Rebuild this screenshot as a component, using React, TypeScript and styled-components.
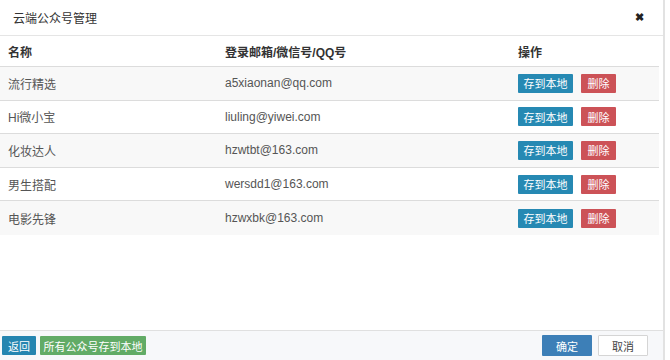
import React from "react";
import styled, { createGlobalStyle } from "styled-components";

const Global = createGlobalStyle`
  html, body { margin: 0; padding: 0; background: #fff; }
  body { font-family: "Liberation Sans", "Noto Sans CJK SC", sans-serif; font-size: 12px; color: #333; }
`;

const Modal = styled.div`
  width: 665px;
  height: 360px;
  display: flex;
  flex-direction: column;
  border-right: 2px solid #e2e2e2;
  box-sizing: border-box;
  background: #fff;
`;

const Header = styled.div`
  height: 36px;
  display: flex;
  align-items: center;
  justify-content: space-between;
  padding: 0 19px 0 13px;
  border-bottom: 1px solid #e5e5e5;
  box-sizing: border-box;
`;

const Title = styled.div`
  font-size: 12px;
  color: #333;
`;

const Close = styled.div`
  font-size: 11px;
  font-weight: bold;
  color: #222;
  line-height: 1;
`;

const Body = styled.div`
  flex: 1;
  padding: 0 4px 0 0;
`;

const Table = styled.div`
  display: flex;
  flex-direction: column;
`;

const Row = styled.div<{ $striped?: boolean; $head?: boolean }>`
  display: grid;
  grid-template-columns: 217px 293px 1fr;
  align-items: center;
  height: ${(p) => (p.$head ? "31px" : "33.6px")};
  padding-left: 8px;
  border-bottom: 1px solid #dcdcdc;
  box-sizing: border-box;
  background: ${(p) => (p.$striped ? "#f8f8f8" : "#fff")};
  font-weight: ${(p) => (p.$head ? 600 : "normal")};
  color: ${(p) => (p.$head ? "#333" : "#555")};
  &:last-child { border-bottom: none; }
`;

const Cell = styled.div`
  white-space: nowrap;
`;

const Actions = styled.div`
  display: flex;
  gap: 8px;
`;

const Btn = styled.button<{ $bg: string; $w: number; $h?: number; $fg?: string; $border?: string }>`
  width: ${(p) => p.$w}px;
  height: ${(p) => p.$h ?? 19}px;
  background: ${(p) => p.$bg};
  color: ${(p) => p.$fg ?? "#fff"};
  border: ${(p) => (p.$border ? `1px solid ${p.$border}` : "none")};
  border-radius: 1px;
  font-family: "Noto Sans CJK SC", sans-serif;
  font-size: 11px;
  padding: 0;
  display: flex;
  align-items: center;
  justify-content: center;
  box-sizing: border-box;
`;

const Footer = styled.div`
  height: 30px;
  border-top: 1px solid #e0e0e0;
  background: #f7f8fa;
  display: flex;
  align-items: center;
  justify-content: space-between;
  padding: 0 15px 0 2px;
  box-sizing: border-box;
`;

const Group = styled.div<{ $gap: number }>`
  display: flex;
  gap: ${(p) => p.$gap}px;
  align-items: center;
`;

const rows = [
  ["流行精选", "a5xiaonan@qq.com"],
  ["Hi微小宝", "liuling@yiwei.com"],
  ["化妆达人", "hzwtbt@163.com"],
  ["男生搭配", "wersdd1@163.com"],
  ["电影先锋", "hzwxbk@163.com"],
];

export default function App() {
  return (
    <>
      <Global />
      <Modal>
        <Header>
          <Title>云端公众号管理</Title>
          <Close>✖</Close>
        </Header>
        <Body>
          <Table>
            <Row $head>
              <Cell>名称</Cell>
              <Cell>登录邮箱/微信号/QQ号</Cell>
              <Cell>操作</Cell>
            </Row>
            {rows.map(([name, mail], i) => (
              <Row key={name} $striped={i % 2 === 0}>
                <Cell>{name}</Cell>
                <Cell>{mail}</Cell>
                <Actions>
                  <Btn $bg="#2689b3" $w={55}>存到本地</Btn>
                  <Btn $bg="#cc5257" $w={35}>删除</Btn>
                </Actions>
              </Row>
            ))}
          </Table>
        </Body>
        <Footer>
          <Group $gap={4}>
            <Btn $bg="#2585b0" $w={34}>返回</Btn>
            <Btn $bg="#62ab66" $w={106}>所有公众号存到本地</Btn>
          </Group>
          <Group $gap={6}>
            <Btn $bg="#3d7fb7" $w={50} $h={21}>确定</Btn>
            <Btn $bg="#fff" $w={50} $h={21} $fg="#444" $border="#d5d5d5">取消</Btn>
          </Group>
        </Footer>
      </Modal>
    </>
  );
}
